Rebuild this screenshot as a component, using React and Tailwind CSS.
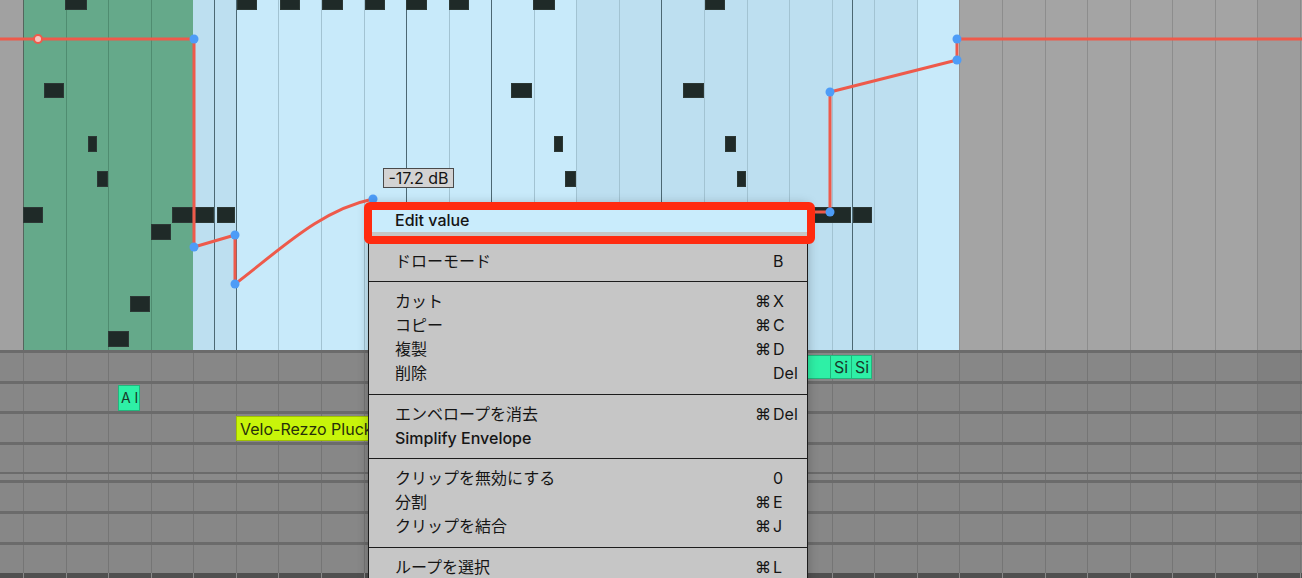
import React from 'react';

const GRID = 'grid grid-cols-[23px_repeat(30,42.57px)_1fr]';

const topCols = [
  'bg-[#a1a1a1]',
  'bg-[#65a98a] border-l border-[#55655d]',
  'bg-[#65a98a] border-l border-[#4f8c70]',
  'bg-[#65a98a] border-l border-[#4f8c70]',
  'bg-[#65a98a] border-l border-[#4f8c70]',
  'bg-[#bddff0] HALF5',
  'bg-[#c8eafa] border-l border-[#4c6873]',
  'bg-[#c8eafa] border-l border-[#a2c3d2]',
  'bg-[#c8eafa] border-l border-[#a2c3d2]',
  'bg-[#c8eafa] border-l border-[#a2c3d2]',
  'bg-[#c8eafa] border-l border-[#4c6873]',
  'bg-[#c8eafa] border-l border-[#a2c3d2]',
  'bg-[#c8eafa] border-l border-[#4c6873]',
  'bg-[#c8eafa] border-l border-[#a2c3d2]',
  'bg-[#bddff0] border-l border-[#a2c3d2]',
  'bg-[#bddff0] border-l border-[#a2c3d2]',
  'bg-[#bddff0] border-l border-[#4c6873]',
  'bg-[#bddff0] border-l border-[#a2c3d2]',
  'bg-[#bddff0] border-l border-[#a2c3d2]',
  'bg-[#bddff0] border-l border-[#a2c3d2]',
  'bg-[#bddff0] border-l border-[#a2c3d2] HALF20',
  'bg-[#bddff0] border-l border-[#a2c3d2]',
  'bg-[#c8eafa] border-l border-[#a2c3d2]',
  'bg-[#a4a4a4] border-l border-[#929292]',
  'bg-[#a4a4a4] border-l border-[#8d8d8d]',
  'bg-[#a4a4a4] border-l border-[#8d8d8d]',
  'bg-[#a4a4a4] border-l border-[#8d8d8d]',
  'bg-[#a4a4a4] border-l border-[#8d8d8d]',
  'bg-[#a4a4a4] border-l border-[#8d8d8d]',
  'bg-[#a4a4a4] border-l border-[#8d8d8d]',
  'bg-[#9d9d9d] border-l border-[#8a8a8a]',
  'bg-[#9d9d9d] border-l border-[#8a8a8a]',
];

const notes = [
  [65, -2, 87, 10], [237, -2, 257, 10], [280, -2, 300, 10], [322, -2, 343, 10],
  [365, -2, 385, 10], [406, -2, 427, 10], [449, -2, 469, 10], [533, -2, 555, 10],
  [705, -2, 725, 10],
  [44, 83, 64, 98], [511, 83, 532, 98], [683, 83, 704, 98],
  [88, 136, 97, 152], [554, 136, 563, 152], [725, 136, 736, 152],
  [97, 171, 108, 187], [565, 171, 576, 187], [737, 171, 746, 187],
  [23, 207, 43, 223], [172, 207, 193, 223], [195, 207, 214, 223], [217, 207, 235, 223],
  [790, 207, 851, 223], [853, 207, 872, 223],
  [151, 224, 171, 240], [130, 296, 150, 312], [108, 331, 129, 347],
];

const dots = [
  [194, 39], [194, 247], [235, 235], [235, 284], [373, 199],
  [830, 212], [830, 92], [957, 60], [957, 39],
];

const envPath =
  'M0 39 L194 39 L194 247 L235 235 L235 284 C280 250 320 210 373 199 L380 235 L813 212 L830 212 L830 92 L957 60 L957 39 L1302 39';

function TopLane() {
  return (
    <div className="relative h-[350px]">
      <div className={`${GRID} h-full`}>
        {topCols.map((c, i) => {
          const cls = c.replace(' HALF5', '').replace(' HALF20', '');
          return (
            <div key={i} className={`${cls} h-full`}>
              {c.includes('HALF5') && <div className="h-full w-[22px] border-r border-[#4c6873]" />}
              {c.includes('HALF20') && <div className="h-full w-[20px] border-r border-[#4c6873]" />}
            </div>
          );
        })}
      </div>
      {notes.map(([x1, y1, x2, y2], i) => (
        <div
          key={i}
          className="absolute bg-[#1f2a28] border border-[#2c3835]"
          style={{ left: x1, top: y1, width: x2 - x1, height: y2 - y1 }}
        />
      ))}
      <svg className="absolute left-0 top-0 pointer-events-none" width="1302" height="350" viewBox="0 0 1302 350">
        <path d={envPath} fill="none" stroke="#ee5a4b" strokeWidth="3" strokeLinejoin="round" />
        <circle cx="38" cy="39" r="4" fill="#f5c6c0" stroke="#ee5a4b" strokeWidth="2" />
        {dots.map(([x, y], i) => (
          <circle key={i} cx={x} cy={y} r="4.5" fill="#4d9cf7" />
        ))}
      </svg>
      <div className="absolute left-[383px] top-[168px] w-[71px] h-[20px] bg-[#d3d3d3] border border-[#4a4a4a] flex items-center justify-center text-[16px] text-[#141414] leading-none font-['Inter',sans-serif]">
        -17.2 dB
      </div>
    </div>
  );
}

const bottomCols = Array.from({ length: 32 }, (_, i) => i);

function RowCells({ h, bg = 'bg-[#878787]', darkBg = 'bg-[#808080]', line = 'border-[#757575]' }) {
  return (
    <div className={`${GRID} ${h}`}>
      {bottomCols.map((i) => (
        <div
          key={i}
          className={`${i >= 30 ? darkBg : bg} ${i === 0 ? '' : `border-l ${line}`} h-full`}
        />
      ))}
    </div>
  );
}

function Sep({ h = 'h-[3px]' }) {
  return <div className={`${h} bg-[#6b6b6b]`} />;
}

function Clip({ left, width, top, height, bg, border, text, textColor = 'text-[#183a2a]', size = 'text-[16px] pl-[3px]' }) {
  return (
    <div
      className={`absolute overflow-hidden whitespace-nowrap ${bg} border ${border} flex items-center ${size} leading-none ${textColor}`}
      style={{ left, width, top, height }}
    >
      {text}
    </div>
  );
}

function Tracks() {
  return (
    <div className="flex flex-col">
      <Sep />
      <div className="relative">
        <RowCells h="h-[28px]" />
        <Clip left={780} width={51} top={2} height={24} bg="bg-[#2ef0a6]" border="border-[#22b57c]" text="" />
        <Clip left={830} width={22} top={2} height={24} bg="bg-[#2ef0a6]" border="border-[#22b57c]" text="Si" />
        <Clip left={851} width={21} top={2} height={24} bg="bg-[#2ef0a6]" border="border-[#22b57c]" text="Si" />
      </div>
      <Sep />
      <div className="relative">
        <RowCells h="h-[27px]" />
        <Clip
          left={118}
          width={22}
          top={1}
          height={26}
          bg="bg-[#2ef0a6]"
          border="border-[#22b57c]"
          text="A I"
          size="text-[14px] pl-[2px]"
        />
      </div>
      <Sep />
      <div className="relative">
        <RowCells h="h-[28px]" />
        <Clip
          left={236}
          width={170}
          top={2}
          height={25}
          bg="bg-[#c8f50a]"
          border="border-[#9fc000]"
          text="Velo-Rezzo Pluck"
          textColor="text-[#27300a]"
        />
      </div>
      <Sep />
      <RowCells h="h-[27px]" />
      <Sep h="h-[2px]" />
      <RowCells h="h-[6px]" bg="bg-[#8a8a8a]" darkBg="bg-[#838383]" />
      <Sep />
      <RowCells h="h-[28px]" />
      <Sep />
      <RowCells h="h-[28px]" />
      <Sep />
      <RowCells h="h-[28px]" />
      <RowCells h="h-[5px]" bg="bg-[#505050]" darkBg="bg-[#505050]" line="border-[#8a8a8a]" />
    </div>
  );
}

const menu = [
  { label: 'Edit value', en: true, hl: true },
  'sep',
  { label: 'ドローモード', key: 'B' },
  'sep',
  { label: 'カット', mod: '⌘', key: 'X' },
  { label: 'コピー', mod: '⌘', key: 'C' },
  { label: '複製', mod: '⌘', key: 'D' },
  { label: '削除', key: 'Del' },
  'sep',
  { label: 'エンベロープを消去', mod: '⌘', key: 'Del' },
  { label: 'Simplify Envelope', en: true },
  'sep',
  { label: 'クリップを無効にする', key: '0' },
  { label: '分割', mod: '⌘', key: 'E' },
  { label: 'クリップを結合', mod: '⌘', key: 'J' },
  'sep',
  { label: 'ループを選択', mod: '⌘', key: 'L' },
];

function ContextMenu() {
  return (
    <div className="absolute left-[368px] top-[204px] w-[440px] bg-[#c6c6c6] border-x border-[#1c1c1c] pt-[4px] pb-2 shadow-[0_0_10px_rgba(0,0,0,0.25)] text-[#151515] font-['Inter','Noto_Sans_CJK_JP','DejaVu_Sans',sans-serif]">
      {menu.map((m, i) =>
        m === 'sep' ? (
          <div key={i} className="h-[16.5px] pt-[8.5px]">
            <div className="h-px bg-[#1c1c1c]" />
          </div>
        ) : (
          <div key={i} className={`flex h-6 items-center justify-between ${m.hl ? 'bg-[#c9ecfc]' : ''}`}>
            <span className={`pl-[26px] leading-none ${m.en ? 'text-[16px] font-medium' : 'text-[16px]'}`}>{m.label}</span>
            <span className="flex w-[52px] text-[16px] leading-none">
              <span className="w-[16px] text-right">{m.mod || ''}</span>
              <span className="ml-[2px] w-[34px]">{m.key || ''}</span>
            </span>
          </div>
        )
      )}
    </div>
  );
}

export default function App() {
  return (
    <div className="relative w-[1302px] h-[578px] overflow-hidden bg-[#878787] font-['Inter','Noto_Sans_CJK_JP',sans-serif]">
      <TopLane />
      <Tracks />
      <ContextMenu />
      <div className="absolute left-[364px] top-[202px] w-[451px] h-[42px] border-[8px] border-[#ff2b10] rounded-[6px]" />
    </div>
  );
}
